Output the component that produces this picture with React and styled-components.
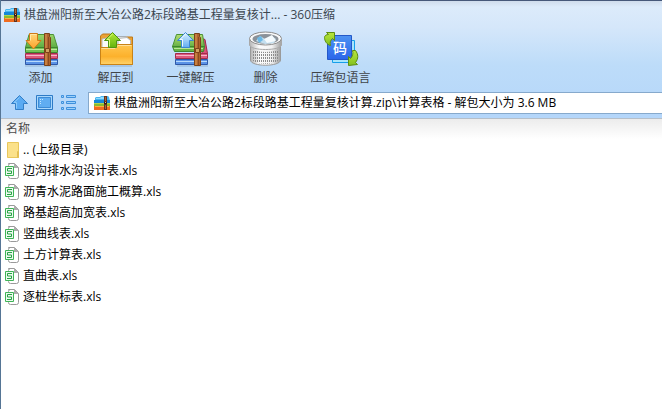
import React from 'react';
import styled, { createGlobalStyle } from 'styled-components';

const GlobalStyle = createGlobalStyle`
  * {
    box-sizing: border-box;
  }

  body {
    margin: 0;
    background: #fff;
    font-family: 'Open Sans', 'Noto Sans CJK SC', sans-serif;
    font-size: 12px;
    line-height: 16px;
    color: #000;
  }

  svg {
    display: block;
    flex: none;
  }
`;

const Window = styled.div`
  display: flex;
  flex-direction: column;
  min-height: 100vh;
  overflow: hidden;
  border-left: 1px solid #557595;
`;

const Chrome = styled.header`
  border-top: 1px solid #46587a;
  border-bottom: 1px solid #b6bfc9;
  background: linear-gradient(#cfdcec 0, #dcebfb 6px, #d5e7fa 26px, #bddcf9 64px, #b4d6fa 100%);
`;

const TitleBar = styled.div`
  display: flex;
  align-items: center;
  gap: 4px;
  height: 27px;
  padding-left: 3px;
`;

const Title = styled.h1`
  margin: 0;
  font-size: 12px;
  font-weight: 400;
  line-height: 16px;
  white-space: nowrap;
  color: #3c4650;
`;

const Toolbar = styled.nav`
  display: flex;
  padding-left: 2px;
`;

const ToolButton = styled.button`
  display: flex;
  flex-direction: column;
  align-items: center;
  gap: 2px;
  width: 75px;
  height: 60px;
  padding: 2px 0 0;
  border: 0;
  background: none;
  font: inherit;
  white-space: nowrap;
  color: #404448;
  cursor: pointer;
`;

const AddressBar = styled.div`
  display: flex;
  align-items: center;
  gap: 7px;
  height: 30px;
  padding-left: 10px;
`;

const NavButton = styled.button`
  display: flex;
  padding: 0;
  border: 0;
  background: none;
  cursor: pointer;
`;

const Address = styled.label`
  display: flex;
  flex: 1;
  align-items: center;
  gap: 4px;
  height: 22px;
  margin-left: 2px;
  padding-left: 5px;
  border: 1px solid #86a9cc;
  border-right: 0;
  background: #fff;
`;

const AddressInput = styled.input`
  flex: 1;
  min-width: 0;
  padding: 0;
  border: 0;
  outline: 0;
  background: none;
  font: inherit;
  color: #000;
`;

const FileTable = styled.table`
  width: 100%;
  border-collapse: collapse;
`;

const HeadCell = styled.th`
  height: 20px;
  padding: 0 0 0 5px;
  background: linear-gradient(#ececec, #fff);
  font-weight: 400;
  text-align: left;
  color: #4c4c4c;
`;

const FileCell = styled.td`
  height: 21px;
  padding: 0 0 0 4px;
`;

const FileName = styled.span`
  display: flex;
  align-items: center;
  gap: 4px;
  white-space: nowrap;
`;

const ArchiveIcon = () => (
  <svg width="16" height="16" viewBox="0 0 16 16" aria-hidden="true">
    <path d="M1 6V3l1-1h4l1-1h7l1 1 1 4z" fill="#48b4ef" />
    <path d="M2 3h4l1-1h6v2H2z" fill="#91dcff" />
    <path d="M0 5h16v3H0z" fill="#1688d8" />
    <path d="M0 8h16v3H0z" fill="#8abb2f" />
    <path d="M0 8h16v1H0z" fill="#b0d64e" />
    <path d="M0 11h16v4H0z" fill="#f06c20" />
    <path d="M1 11h14v1H1z" fill="#ffb13e" />
    <path d="M10 1h3v14h-3z" fill="#65331c" />
    <path d="M11 2h1v4h-1zM11 10h1v4h-1z" fill="#a8683c" />
    <path d="M10 7h3v2h-3z" fill="#321c18" />
    <path d="M11 7h1v1h-1z" fill="#e8c07c" />
  </svg>
);

const Strap = () => (
  <>
    <path d="M22.500 3.500h5v3l1 1v28h-6z" fill="#b0642d" stroke="#7c421a" />
    <path d="M24 4v31" stroke="#dc9a56" />
    <path d="M26.500 7v28" stroke="#8d4b20" />
    <path d="M23.500 18.500h4v4h-4z" fill="#d4a160" stroke="#7c421a" />
  </>
);

const AddIcon = () => (
  <svg width="37" height="38" viewBox="0 0 37 38" aria-hidden="true">
    <defs>
      <linearGradient id="addCover" x2="0" y2="1">
        <stop stopColor="#9bd66a" />
        <stop offset="1" stopColor="#5dac42" />
      </linearGradient>
      <linearGradient id="addArrow" x2="0" y2="1">
        <stop stopColor="#ffd778" />
        <stop offset="1" stopColor="#fba22b" />
      </linearGradient>
    </defs>
    <path d="M3 36h32" stroke="#6d8cab" opacity=".5" />
    <path d="M3.500 29.500h32v5h-32z" fill="#5b92e6" stroke="#2f58a8" />
    <path d="M4 31.500h31" stroke="#b7dafc" />
    <path d="M3.500 23.500h32v5h-32z" fill="#dd5a80" stroke="#a32c4d" />
    <path d="M4 25.500h31" stroke="#f7b6c8" />
    <path d="M7 4.500h24.500l4 13h-32z" fill="url(#addCover)" stroke="#4b9236" />
    <path d="M3.500 17.500h32v5h-32z" fill="#74c254" stroke="#3f852f" />
    <path d="M4 19.500h31" stroke="#bde99d" />
    <Strap />
    <path d="M7.500 3.500h8v7h3.500L11.500 19 4 10.500h3.500z" fill="url(#addArrow)" stroke="#cf7a17" />
    <path d="M8.500 10.500v-6h6" fill="none" stroke="#ffe7a4" />
  </svg>
);

const ExtractToIcon = () => (
  <svg width="37" height="38" viewBox="0 0 37 38" aria-hidden="true">
    <defs>
      <linearGradient id="folderFront" x2="0" y2="1">
        <stop stopColor="#ffc64f" />
        <stop offset=".6" stopColor="#fcb12c" />
        <stop offset="1" stopColor="#ffd36b" />
      </linearGradient>
      <linearGradient id="folderArrow" x2="0" y2="1">
        <stop stopColor="#b5ea36" />
        <stop offset="1" stopColor="#62b30f" />
      </linearGradient>
    </defs>
    <path d="M3 36h32" stroke="#6d8cab" opacity=".5" />
    <path d="M3.500 34.500V6l2-2h8l2 3h20v27.500z" fill="#e9a135" stroke="#bd7919" />
    <path d="M5 9l10-2 4 16H5z" fill="#fafafa" stroke="#b5b5b5" />
    <path d="M18 6.500h11l2 3v13H18z" fill="#e5e8ea" stroke="#a8afb5" />
    <path d="M21 8.500l9-1 3.500 3v13H21z" fill="#fff" stroke="#b5b8ba" />
    <path d="M3.500 17.500h14l3-3h15v20h-32z" fill="url(#folderFront)" stroke="#c98317" />
    <path d="M4.500 18.500h13.500l3-3h13.500" fill="none" stroke="#ffe09a" />
    <path d="M15.500 2.500l8 8h-4v7h-8v-7h-4z" fill="url(#folderArrow)" stroke="#4f9512" />
    <path d="M15.500 4l-5.500 5.500h2.500v7" fill="none" stroke="#d8f879" />
  </svg>
);

const ExtractIcon = () => (
  <svg width="37" height="38" viewBox="0 0 37 38" aria-hidden="true">
    <defs>
      <linearGradient id="lidCover" x2="0" y2="1">
        <stop stopColor="#b4de75" />
        <stop offset="1" stopColor="#66b045" />
      </linearGradient>
      <linearGradient id="lidArrow" x2="0" y2="1">
        <stop stopColor="#dcf3ff" />
        <stop offset="1" stopColor="#61acf2" />
      </linearGradient>
    </defs>
    <path d="M5 36h31" stroke="#6d8cab" opacity=".5" />
    <path d="M30 8.500l3 1 2.500 14H30z" fill="#db5078" stroke="#9d2a49" />
    <path d="M3.500 29.500h32v5h-32z" fill="#5b92e6" stroke="#2f58a8" />
    <path d="M4 31.500h31" stroke="#b7dafc" />
    <path d="M3.500 23.500h32v5h-32z" fill="#dd5a80" stroke="#a32c4d" />
    <path d="M4 25.500h31" stroke="#f7b6c8" />
    <path d="M4.500 4.500h26l2 12H.5z" fill="url(#lidCover)" stroke="#4b9236" />
    <path d="M.5 16.500h32l-1 5h-29z" fill="#66b545" stroke="#3f852f" />
    <path d="M2 18.500h29" stroke="#b9e698" />
    <Strap />
    <path d="M13.500 2.500l8 8h-4v7h-8v-7h-4z" fill="url(#lidArrow)" stroke="#3b86d2" />
    <path d="M13.500 4L8 9.500h2.500v7" fill="none" stroke="#eefaff" />
  </svg>
);

const DeleteIcon = () => (
  <svg width="37" height="38" viewBox="0 0 37 38" aria-hidden="true">
    <defs>
      <linearGradient id="basket">
        <stop stopColor="#b4b4b4" />
        <stop offset=".3" stopColor="#fcfcfc" />
        <stop offset=".7" stopColor="#f2f2f2" />
        <stop offset="1" stopColor="#a0a0a0" />
      </linearGradient>
      <pattern id="holes" width="2" height="3" patternUnits="userSpaceOnUse">
        <path d="M0 0h1v2H0z" fill="#8c8c8c" />
      </pattern>
    </defs>
    <path d="M3.500 10v20c0 7 30 7 30 0V10z" fill="url(#basket)" stroke="#9a9a9a" />
    <path d="M5 19c6 4 21 4 27 0v11c-4 5-23 5-27 0z" fill="url(#holes)" />
    <path d="M2.500 9v6c1 6 31 6 32 0V9z" fill="url(#basket)" stroke="#a8a8a8" />
    <ellipse cx="18.500" cy="8.500" rx="16" ry="6.500" fill="#f8f8f8" stroke="#8c8c8c" />
    <ellipse cx="18.500" cy="9" rx="13" ry="5" fill="#8b9299" />
    <path d="M9 11l4-5 5 3 7-3 4 3-2 4-9 1z" fill="#c4dfef" />
    <path d="M17 9l8-4 4 6-9 2z" fill="#f4fafd" />
    <path d="M10 8l4-2 2 4-4 3z" fill="#6bb9e6" />
  </svg>
);

const CodeGlyph = styled.text`
  font-family: 'Noto Sans CJK SC', sans-serif;
  font-size: 14px;
  font-weight: 500;
  fill: #fff;
`;

const LanguageIcon = () => (
  <svg width="37" height="38" viewBox="0 0 37 38" aria-hidden="true">
    <defs>
      <linearGradient id="codePage" x2="0" y2="1">
        <stop stopColor="#4d92f2" />
        <stop offset="1" stopColor="#2b66ea" />
      </linearGradient>
      <linearGradient id="langArrow" x2="0" y2="1">
        <stop stopColor="#b9e63c" />
        <stop offset="1" stopColor="#82c11e" />
      </linearGradient>
    </defs>
    <path d="M10.500 10.500h22v22h-22z" fill="#a6e4fc" stroke="#169fea" />
    <path d="M5.500 5.500h24v24h-24z" fill="url(#codePage)" stroke="#2458c8" />
    <CodeGlyph x="11" y="23">码</CodeGlyph>
    <path
      d="M4.500 2.500h8v8l-2-2c-2 2-3 4-2 7-4-1-6-5-6-8 0-2 2-3 4-3z"
      fill="url(#langArrow)"
      stroke="#5d8d10"
    />
    <path
      d="M33.500 20.500c3 4 3 8 0 12l2 2-9 1v-9l2 2c2-2 3-5 2-8z"
      fill="url(#langArrow)"
      stroke="#5d8d10"
    />
  </svg>
);

const UpIcon = () => (
  <svg width="18" height="18" viewBox="0 0 18 18" aria-hidden="true">
    <path d="M8.500 1.500l8 8h-4v6h-8v-6h-4z" fill="#5aaaf2" stroke="#347fc7" strokeLinejoin="round" />
    <path d="M8.500 3.500L3 8.500h2.500v6" fill="none" stroke="#8ccbfb" />
  </svg>
);

const ViewIcon = () => (
  <svg width="18" height="18" viewBox="0 0 18 18" aria-hidden="true">
    <path d="M.5 1.500h16v14H.5z" fill="#a9d7fc" stroke="#2e7bc6" />
    <path d="M2.500 3.500h12v10h-12z" fill="#60adf2" stroke="#3d8bd5" />
    <path d="M4 5h1v1H4zM6 5h1v1H6zM4 7h1v1H4zM4 9h1v1H4z" fill="#c4e7ff" />
  </svg>
);

const ListIcon = () => (
  <svg width="18" height="18" viewBox="0 0 18 18" aria-hidden="true">
    <g fill="#9bd0fb" stroke="#3f90dc">
      <path d="M.5 1.500h2v2h-2zM5.500 1.500h9v2h-9z" />
      <path d="M.5 7.500h2v2h-2zM5.500 7.500h9v2h-9z" />
      <path d="M.5 13.500h2v2h-2zM5.500 13.500h9v2h-9z" />
    </g>
  </svg>
);

const FolderIcon = () => (
  <svg width="14" height="16" viewBox="0 0 14 16" aria-hidden="true">
    <path d="M2.500.5h11v15h-11z" fill="#fbe18a" stroke="#e9c75c" />
    <path d="M12.500 9.500h1v6h-1z" fill="#ffeeaa" stroke="#e3bf53" />
  </svg>
);

const SheetIcon = () => (
  <svg width="14" height="16" viewBox="0 0 14 16" aria-hidden="true">
    <path
      d="M3.500.5h6l4 4v9q0 2-2 2h-6q-2 0-2-2v-11q0-2 2-2z"
      fill="#fff"
      stroke="#9a9a9a"
    />
    <path d="M9 0l5 5H9z" fill="#adadad" />
    <path d="M.5 3.500h8v9h-8z" fill="#edf9ef" stroke="#3fb457" />
    <path d="M7 5.500H2.500V8h4v2.500H2" fill="none" stroke="#27a344" />
  </svg>
);

const tools = [
  { label: '添加', Icon: AddIcon },
  { label: '解压到', Icon: ExtractToIcon },
  { label: '一键解压', Icon: ExtractIcon },
  { label: '删除', Icon: DeleteIcon },
  { label: '压缩包语言', Icon: LanguageIcon },
];

const files = [
  '边沟排水沟设计表.xls',
  '沥青水泥路面施工概算.xls',
  '路基超高加宽表.xls',
  '竖曲线表.xls',
  '土方计算表.xls',
  '直曲表.xls',
  '逐桩坐标表.xls',
];

const FileRow = ({ name, Icon }) => (
  <tr>
    <FileCell>
      <FileName>
        <Icon />
        {name}
      </FileName>
    </FileCell>
  </tr>
);

const App = () => (
  <Window>
    <GlobalStyle />
    <Chrome>
      <TitleBar>
        <ArchiveIcon />
        <Title>棋盘洲阳新至大冶公路2标段路基工程量复核计... - 360压缩</Title>
      </TitleBar>
      <Toolbar>
        {tools.map(({ label, Icon }) => (
          <ToolButton key={label} type="button">
            <Icon />
            {label}
          </ToolButton>
        ))}
      </Toolbar>
      <AddressBar>
        <NavButton type="button" aria-label="向上">
          <UpIcon />
        </NavButton>
        <NavButton type="button" aria-label="视图">
          <ViewIcon />
        </NavButton>
        <NavButton type="button" aria-label="列表">
          <ListIcon />
        </NavButton>
        <Address>
          <ArchiveIcon />
          <AddressInput
            aria-label="地址"
            defaultValue="棋盘洲阳新至大冶公路2标段路基工程量复核计算.zip\计算表格 - 解包大小为 3.6 MB"
          />
        </Address>
      </AddressBar>
    </Chrome>
    <FileTable>
      <thead>
        <tr>
          <HeadCell scope="col">名称</HeadCell>
        </tr>
      </thead>
      <tbody>
        <FileRow name=".. (上级目录)" Icon={FolderIcon} />
        {files.map((name) => (
          <FileRow key={name} name={name} Icon={SheetIcon} />
        ))}
      </tbody>
    </FileTable>
  </Window>
);

export default App;
